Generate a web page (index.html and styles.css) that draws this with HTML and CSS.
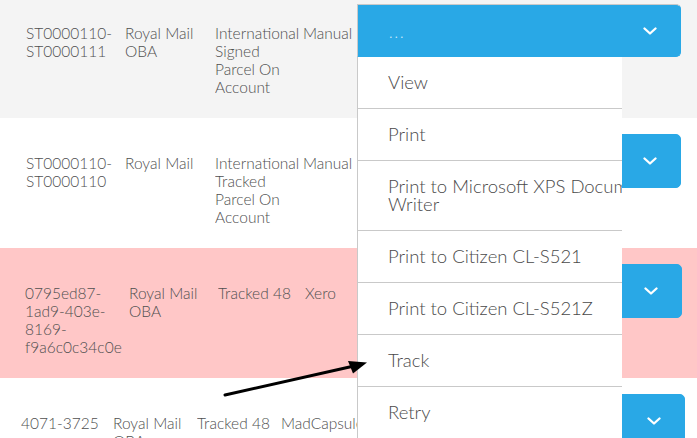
FILE: index.html
```html
<!DOCTYPE html>
<html lang="en">
<head>
<meta charset="utf-8">
<title>Orders</title>
<link rel="stylesheet" href="styles.css">
</head>
<body>
<div class="page">
  <div class="list">
    <div class="row row-grey cols-a">
      <div class="cell">ST0000110-<br>ST0000111</div>
      <div class="cell">Royal Mail<br>OBA</div>
      <div class="cell">International<br>Signed<br>Parcel On<br>Account</div>
      <div class="cell">Manual</div>
      <div class="action">
        <div class="dropdown">
          <button class="btn btn-open"><span class="dots">...</span><svg class="chev" viewBox="0 0 14 8" width="14" height="8"><path d="M1.5 1.5 L7 6.5 L12.5 1.5" fill="none" stroke="#fff" stroke-width="2.3" stroke-linecap="round" stroke-linejoin="round"/></svg></button>
          <ul class="menu">
            <li>View</li>
            <li>Print</li>
            <li>Print to Microsoft XPS Document<br>Writer</li>
            <li>Print to Citizen CL-S521</li>
            <li>Print to Citizen CL-S521Z</li>
            <li>Track</li>
            <li>Retry</li>
          </ul>
        </div>
      </div>
    </div>
    <div class="row row-white cols-a">
      <div class="cell">ST0000110-<br>ST0000110</div>
      <div class="cell">Royal Mail</div>
      <div class="cell">International<br>Tracked<br>Parcel On<br>Account</div>
      <div class="cell">Manual</div>
      <div class="action">
        <button class="btn"><span class="dots">...</span><svg class="chev" viewBox="0 0 14 8" width="14" height="8"><path d="M1.5 1.5 L7 6.5 L12.5 1.5" fill="none" stroke="#fff" stroke-width="2.3" stroke-linecap="round" stroke-linejoin="round"/></svg></button>
      </div>
    </div>
    <div class="row row-pink cols-b">
      <div class="cell">0795ed87-<br>1ad9-403e-<br>8169-<br>f9a6c0c34c0e</div>
      <div class="cell">Royal Mail<br>OBA</div>
      <div class="cell">Tracked 48</div>
      <div class="cell">Xero</div>
      <div class="action">
        <button class="btn"><span class="dots">...</span><svg class="chev" viewBox="0 0 14 8" width="14" height="8"><path d="M1.5 1.5 L7 6.5 L12.5 1.5" fill="none" stroke="#fff" stroke-width="2.3" stroke-linecap="round" stroke-linejoin="round"/></svg></button>
      </div>
    </div>
    <div class="row row-white cols-c">
      <div class="cell">4071-3725</div>
      <div class="cell">Royal Mail<br>OBA</div>
      <div class="cell">Tracked 48</div>
      <div class="cell">MadCapsule</div>
      <div class="action">
        <button class="btn"><span class="dots">...</span><svg class="chev" viewBox="0 0 14 8" width="14" height="8"><path d="M1.5 1.5 L7 6.5 L12.5 1.5" fill="none" stroke="#fff" stroke-width="2.3" stroke-linecap="round" stroke-linejoin="round"/></svg></button>
      </div>
    </div>
  </div>
  <svg class="arrow" width="697" height="438" viewBox="0 0 697 438">
    <line x1="225" y1="395" x2="354" y2="366" stroke="#000" stroke-width="3" stroke-linecap="round"/>
    <polygon points="367,362.5 348,361 353,373.5" fill="#000"/>
  </svg>
</div>
</body>
</html>
```

FILE: styles.css
```css
* { box-sizing: border-box; }

html, body {
  margin: 0;
  padding: 0;
  background: #ffffff;
  overflow: hidden;
}

body {
  font-family: "Lato", "Liberation Sans", sans-serif;
  font-weight: 300;
  color: #4f4f4f;
}

.page {
  position: relative;
  width: 697px;
  height: 438px;
  overflow: hidden;
}

.list {
  margin-top: -12px;
}

.row {
  display: grid;
  height: 130px;
  align-items: start;
  font-size: 15.5px;
  line-height: 18px;
}

.row-grey { background: #f4f4f4; }
.row-white { background: #ffffff; }
.row-pink { background: #ffc7c7; }

.cols-a {
  padding-left: 26px;
  grid-template-columns: 99px 90px 88px 54px 324px;
}

.cols-b {
  padding-left: 25px;
  grid-template-columns: 104px 89px 87px 57px 320px;
}

.cols-c {
  padding-left: 21px;
  grid-template-columns: 92px 84px 84px 80px 324px;
}

.cell {
  padding-top: 36px;
  white-space: nowrap;
  overflow: hidden;
}

.action {
  padding-top: 16px;
}

.dropdown {
  position: relative;
  z-index: 5;
}

.btn {
  display: flex;
  align-items: center;
  justify-content: space-between;
  width: 100%;
  height: 54px;
  padding: 0 23px 0 31px;
  background: #29a8e6;
  border: 1px solid #29a8e6;
  border-radius: 5px;
  font-family: inherit;
  font-weight: 300;
  font-size: 15px;
  color: #d6eefb;
  cursor: pointer;
}

.btn-open {
  height: 53px;
  border-color: #c9c9c9 #29a8e6 #29a8e6 #c9c9c9;
  border-radius: 0 5px 5px 0;
}

.dots {
  letter-spacing: 2px;
  position: relative;
  top: 1px;
}

.chev {
  display: block;
}

.menu {
  position: absolute;
  top: 100%;
  left: 0;
  width: 265px;
  margin: 0;
  padding: 0;
  list-style: none;
  background: #ffffff;
  border-left: 1px solid #c9c9c9;
  font-size: 18.5px;
  line-height: 18px;
  color: #4a4a4a;
}

.menu li {
  padding: 16px 0 17px 30px;
  border-bottom: 1px solid #c9c9c9;
  white-space: nowrap;
  overflow: hidden;
}

.arrow {
  position: absolute;
  left: 0;
  top: 0;
  z-index: 10;
  pointer-events: none;
}
```
